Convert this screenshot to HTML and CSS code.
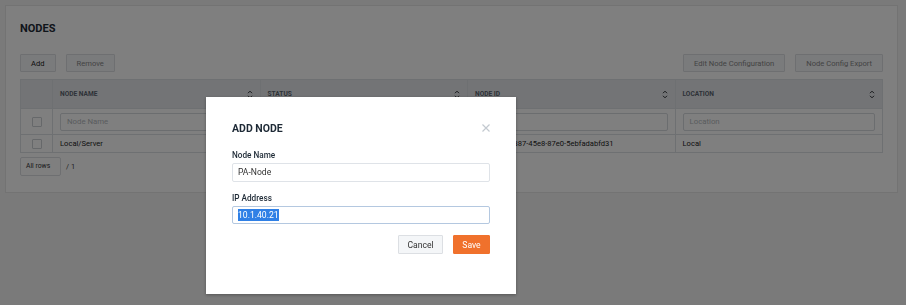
FILE: index.html
```html
<!DOCTYPE html>
<html>
<head>
    <meta charset="UTF-8">
    <title>Nodes</title>
    <link rel="stylesheet" href="styles.css">
</head>
<body>
    <div class="card">
        <h1 class="title">NODES</h1>
        <div class="toolbar">
            <div class="left">
                <button class="btn">Add</button>
                <button class="btn muted">Remove</button>
            </div>
            <div class="right">
                <button class="btn muted">Edit Node Configuration</button>
                <button class="btn muted">Node Config Export</button>
            </div>
        </div>
        <table class="grid">
            <thead>
                <tr>
                    <th class="chk"></th>
                    <th><div class="th">NODE NAME<svg class="sort" width="6" height="9" viewBox="0 0 6 9"><path d="M1 3.2 3 1.2 5 3.2M1 5.8 3 7.8 5 5.8" fill="none" stroke="#2a2d31" stroke-width="1"/></svg></div></th>
                    <th><div class="th">STATUS<svg class="sort" width="6" height="9" viewBox="0 0 6 9"><path d="M1 3.2 3 1.2 5 3.2M1 5.8 3 7.8 5 5.8" fill="none" stroke="#2a2d31" stroke-width="1"/></svg></div></th>
                    <th><div class="th">NODE ID<svg class="sort" width="6" height="9" viewBox="0 0 6 9"><path d="M1 3.2 3 1.2 5 3.2M1 5.8 3 7.8 5 5.8" fill="none" stroke="#2a2d31" stroke-width="1"/></svg></div></th>
                    <th><div class="th">LOCATION<svg class="sort" width="6" height="9" viewBox="0 0 6 9"><path d="M1 3.2 3 1.2 5 3.2M1 5.8 3 7.8 5 5.8" fill="none" stroke="#2a2d31" stroke-width="1"/></svg></div></th>
                </tr>
            </thead>
            <tbody>
                <tr class="filters">
                    <td class="chk"><span class="box"></span></td>
                    <td><div class="filter">Node Name</div></td>
                    <td><div class="filter"></div></td>
                    <td><div class="filter"></div></td>
                    <td><div class="filter">Location</div></td>
                </tr>
                <tr class="row">
                    <td class="chk"><span class="box"></span></td>
                    <td>Local/Server</td>
                    <td></td>
                    <td>d1c2b4a6-f387-45e8-87e0-5ebfadabfd31</td>
                    <td>Local</td>
                </tr>
            </tbody>
        </table>
        <div class="pager">
            <div class="rows">All rows</div>
            <span class="pages">/ 1</span>
        </div>
    </div>

    <div class="overlay"></div>

    <div class="modal">
        <div class="modal-head">
            <h2>ADD NODE</h2>
            <svg class="close" width="8" height="8" viewBox="0 0 8 8"><path d="M0.5 0.5 7.5 7.5M7.5 0.5 0.5 7.5" stroke="#c3c9d0" stroke-width="1.2"/></svg>
        </div>
        <label class="lbl">Node Name</label>
        <div class="field">PA-Node</div>
        <label class="lbl">IP Address</label>
        <div class="field focus"><span class="sel">10.1.40.21</span></div>
        <div class="actions">
            <button class="btn cancel">Cancel</button>
            <button class="btn save">Save</button>
        </div>
    </div>
</body>
</html>
```

FILE: styles.css
```css
*{
    margin: 0;
    padding: 0;
    box-sizing: border-box;
}
html,body{
    height: 100%;
}
body{
    background-color: #f4f4f4;
    font-family: Roboto, "Liberation Sans", sans-serif;
    color: #222;
    padding: 5px 8px 0 5px;
}
.card{
    background-color: white;
    border: 1px solid #e6e6e6;
    padding: 16px 14px 16px 14px;
    height: 188px;
}
.title{
    font-size: 11px;
    font-weight: 700;
    color: #1e2a36;
    line-height: 14px;
    height: 20px;
}
.toolbar{
    display: flex;
    justify-content: space-between;
    margin-top: 12px;
}
.left, .right{
    display: flex;
    gap: 10px;
}
.btn{
    font-family: inherit;
    font-size: 7.6px;
    height: 18px;
    padding: 0 10px;
    border: 1px solid #dcdfe3;
    background-color: #f4f6f8;
    color: #222;
    border-radius: 1px;
}
.btn.muted{
    color: #888;
}
.grid{
    margin-top: 7px;
    width: 863px;
    border-collapse: collapse;
    table-layout: fixed;
    font-size: 7.6px;
}
.grid th, .grid td{
    border: 1px solid #dde0e4;
    text-align: left;
}
.grid th{
    background-color: #e6e9ed;
    height: 29px;
    font-size: 6.6px;
    font-weight: 700;
    color: #5c6570;
    padding: 0 7px;
}
.grid th.chk, .grid td.chk{
    width: 32px;
    text-align: center;
    padding: 0;
}
.th{
    display: flex;
    justify-content: space-between;
    align-items: center;
}
.filters td{
    height: 26px;
    padding: 0 7px;
}
.filter{
    height: 18px;
    border: 1px solid #d6dade;
    border-radius: 2px;
    color: #b4b8bd;
    font-size: 7.8px;
    line-height: 16px;
    padding-left: 6px;
}
.row td{
    height: 18px;
    padding: 0 7px;
    color: #222;
}
.box{
    display: inline-block;
    width: 10px;
    height: 10px;
    border: 1px solid #ccd0d5;
    border-radius: 1px;
    vertical-align: middle;
}
.pager{
    display: flex;
    align-items: center;
    gap: 5px;
    margin-top: 4px;
}
.rows{
    width: 41px;
    height: 19px;
    border: 1px solid #dcdfe3;
    border-radius: 2px;
    font-size: 6.8px;
    line-height: 17px;
    padding-left: 5px;
    color: #333;
}
.pages{
    font-size: 7.4px;
    color: #444;
}
.overlay{
    position: fixed;
    inset: 0;
    background-color: rgba(0, 0, 0, 0.5);
}
.modal{
    position: absolute;
    left: 206px;
    top: 97px;
    width: 310px;
    height: 197px;
    background-color: white;
    padding: 24px 26px 0 26px;
    box-shadow: 0 1px 3px rgba(0, 0, 0, 0.3);
}
.modal-head{
    display: flex;
    justify-content: space-between;
    align-items: center;
    height: 14px;
    margin-bottom: 15px;
}
.modal-head h2{
    font-size: 10.5px;
    font-weight: 700;
    color: #1e2a36;
}
.lbl{
    display: block;
    font-size: 8.2px;
    font-weight: 500;
    color: #1e2a36;
    line-height: 10px;
    margin-bottom: 3px;
}
.field{
    height: 19px;
    border: 1px solid #dfe3e8;
    border-radius: 2px;
    font-size: 8.6px;
    line-height: 17px;
    padding-left: 5px;
    color: #333;
    margin-bottom: 11px;
}
.field.focus{
    border-color: #b4c8e0;
    height: 18px;
    line-height: 16px;
}
.sel{
    background-color: #2f80e6;
    color: white;
    padding: 1px 0;
}
.actions{
    display: flex;
    justify-content: flex-end;
    gap: 10px;
    margin-top: 4px;
}
.cancel{
    width: 45px;
    height: 19px;
    padding: 0;
    font-size: 8.6px;
    color: #333;
}
.save{
    width: 37px;
    height: 19px;
    padding: 0;
    font-size: 8.6px;
    background-color: #f0712c;
    border-color: #f0712c;
    color: white;
}
```
